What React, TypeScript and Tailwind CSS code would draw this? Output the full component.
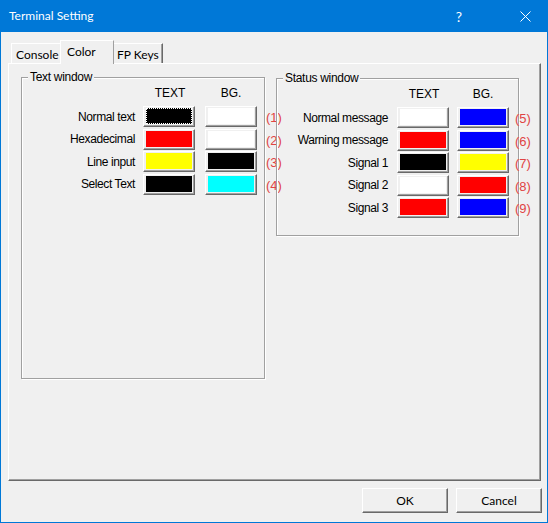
import React from "react";

type Row = { label: string; text: string; bg: string; num: string; focus?: boolean };

const textRows: Row[] = [
  { label: "Normal text", text: "#000000", bg: "#ffffff", num: "(1)", focus: true },
  { label: "Hexadecimal", text: "#ff0000", bg: "#ffffff", num: "(2)" },
  { label: "Line input", text: "#ffff00", bg: "#000000", num: "(3)" },
  { label: "Select Text", text: "#000000", bg: "#00ffff", num: "(4)" },
];

const statusRows: Row[] = [
  { label: "Normal message", text: "#ffffff", bg: "#0000ff", num: "(5)" },
  { label: "Warning message", text: "#ff0000", bg: "#0000ff", num: "(6)" },
  { label: "Signal 1", text: "#000000", bg: "#ffff00", num: "(7)" },
  { label: "Signal 2", text: "#ffffff", bg: "#ff0000", num: "(8)" },
  { label: "Signal 3", text: "#ff0000", bg: "#0000ff", num: "(9)" },
];

const ColorButton = ({ color, focus }: { color: string; focus?: boolean }) => {
  return (
    <div className="flex h-[21px] w-[52px] shrink-0 border border-t-white border-l-white border-r-[#696969] border-b-[#696969] bg-[#f0f0f0] pt-[1px] pl-[2px] pr-[2px] pb-[2px] shadow-[inset_-1px_-1px_0_#a0a0a0]">
      <div
        className={
          focus
            ? "flex-1 outline-1 outline-dotted outline-white -outline-offset-1"
            : "flex-1"
        }
        style={{ backgroundColor: color }}
      />
    </div>
  );
};

const Group = ({
  title,
  className,
  labelW,
  gap1,
  gap2,
  gap3,
  rows,
}: {
  title: string;
  className: string;
  labelW: string;
  gap1: string;
  gap2: string;
  gap3: string;
  rows: Row[];
}) => {
  return (
    <div
      className={`relative shrink-0 border border-[#a0a0a0] shadow-[inset_1px_1px_0_#fff,1px_1px_0_#fff] ${className}`}
    >
      {/* LEGEND */}
      <span className="absolute -top-[8px] left-[6px] bg-[#f0f0f0] px-[2px] leading-[14px] tracking-[-0.3px]">
        {title}
      </span>

      {/* HEADER */}
      <div className="flex w-max pt-[8px] leading-[14px]">
        <div className={`${labelW} shrink-0`} />
        <div className={`w-[52px] shrink-0 pl-[2px] text-center ${gap1}`}>TEXT</div>
        <div className={`w-[52px] shrink-0 text-center ${gap2}`}>BG.</div>
      </div>

      {/* ROWS */}
      <div className="mt-[6px] flex w-max flex-col gap-[1.5px]">
        {rows.map((r) => (
          <div key={r.label} className="flex h-[21px] items-center">
            <div className={`${labelW} shrink-0 text-right tracking-[-0.4px]`}>{r.label}</div>
            <div className={gap1}>
              <ColorButton color={r.text} focus={r.focus} />
            </div>
            <div className={gap2}>
              <ColorButton color={r.bg} />
            </div>
            <div className={`${gap3} mt-[3px] shrink-0 text-[13px] text-[#e04444]`}>{r.num}</div>
          </div>
        ))}
      </div>
    </div>
  );
};

const Tab = ({ label, active }: { label: string; active?: boolean }) => {
  if (active) {
    return (
      <div className="relative z-10 -mx-[2px] -mb-px flex h-[24px] w-[54px] items-start border-t border-l border-r border-t-white border-l-white border-r-[#a0a0a0] bg-[#f0f0f0] pl-[6px] pt-[2px]">
        {label}
      </div>
    );
  }
  return (
    <div className="flex h-[20px] w-[51px] items-start border-t border-l border-r border-t-white border-l-white border-r-[#696969] bg-[#f0f0f0] pl-[4px] pt-[2px] shadow-[inset_-1px_0_0_#a0a0a0]">
      {label}
    </div>
  );
};

const App = () => {
  return (
    <div className="flex h-[523px] w-[548px] flex-col bg-[#f0f0f0] font-[Lato,sans-serif] text-[12px] text-black">
      {/* TITLE BAR */}
      <div className="flex h-[32px] shrink-0 items-center bg-[#0078d7] text-white">
        <div className="pl-[9px] text-[12px]">Terminal Setting</div>
        <div className="ml-auto flex h-full items-center">
          <div className="mr-[20px] flex h-full w-[46px] items-center justify-center text-[14px]">?</div>
          <div className="flex h-full w-[46px] items-center justify-center">
            <svg width="11" height="11" viewBox="0 0 11 11">
              <path d="M0.5 0.5 L10.5 10.5 M10.5 0.5 L0.5 10.5" stroke="white" strokeWidth="1" />
            </svg>
          </div>
        </div>
      </div>

      {/* BODY */}
      <div className="flex flex-1 flex-col border-x border-b border-[#0078d7] pl-[7px]">
        {/* TABS */}
        <div className="flex items-end pl-[3px] pt-[8px]">
          <Tab label="Console" />
          <Tab label="Color" active />
          <Tab label="FP Keys" />
        </div>

        {/* PANEL */}
        <div className="flex h-[418px] w-[533px] items-start gap-[11px] border border-t-white border-l-white border-r-[#696969] border-b-[#696969] pl-[12px] pt-[13px] font-['Liberation_Sans',Arial,sans-serif] shadow-[inset_-1px_-1px_0_#a0a0a0]">
          <Group
            title="Text window"
            className="h-[302px] w-[244px]"
            labelW="w-[113px]"
            gap1="ml-[8px]"
            gap2="ml-[10px]"
            gap3="ml-[9px]"
            rows={textRows}
          />
          <Group
            title="Status window"
            className="mt-px h-[158px] w-[243px]"
            labelW="w-[111px]"
            gap1="ml-[9px]"
            gap2="ml-[8px]"
            gap3="ml-[6px]"
            rows={statusRows}
          />
        </div>

        {/* BUTTONS */}
        <div className="mt-[7px] flex justify-end gap-[8px] pr-[5px]">
          <button className="h-[25px] w-[86px] border border-t-white border-l-white border-r-[#696969] border-b-[#696969] bg-[#f0f0f0] shadow-[inset_-1px_-1px_0_#a0a0a0]">
            OK
          </button>
          <button className="h-[25px] w-[86px] border border-t-white border-l-white border-r-[#696969] border-b-[#696969] bg-[#f0f0f0] shadow-[inset_-1px_-1px_0_#a0a0a0]">
            Cancel
          </button>
        </div>
      </div>
    </div>
  );
};

export default App;
